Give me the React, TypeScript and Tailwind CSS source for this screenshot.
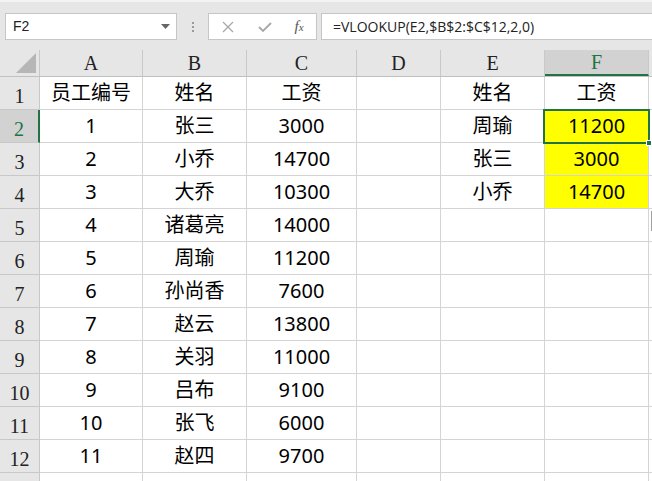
import React from "react";

const cols = [
  { key: "A", w: "w-[103px]" },
  { key: "B", w: "w-[104px]" },
  { key: "C", w: "w-[110px]" },
  { key: "D", w: "w-[84px]" },
  { key: "E", w: "w-[104px]" },
  { key: "F", w: "w-[104px]" },
  { key: "G", w: "w-[40px]" },
];

const data: string[][] = [
  ["员工编号", "姓名", "工资", "", "姓名", "工资"],
  ["1", "张三", "3000", "", "周瑜", "11200"],
  ["2", "小乔", "14700", "", "张三", "3000"],
  ["3", "大乔", "10300", "", "小乔", "14700"],
  ["4", "诸葛亮", "14000", "", "", ""],
  ["5", "周瑜", "11200", "", "", ""],
  ["6", "孙尚香", "7600", "", "", ""],
  ["7", "赵云", "13800", "", "", ""],
  ["8", "关羽", "11000", "", "", ""],
  ["9", "吕布", "9100", "", "", ""],
  ["10", "张飞", "6000", "", "", ""],
  ["11", "赵四", "9700", "", "", ""],
  ["", "", "", "", "", ""],
];

const serif = { fontFamily: '"Liberation Serif", "Times New Roman", serif' };
const cellFont = {
  fontFamily: '"Noto Sans", "Noto Sans CJK SC", sans-serif',
};

export default function App() {
  return (
    <div className="w-[652px] h-[481px] overflow-hidden bg-white relative">
      {/* Formula bar */}
      <div className="h-[50px] bg-[#e6e6e6] border-t-2 border-[#f3f3f3] flex items-start pt-[11px] pl-[5px]">
        <div
          className="w-[172px] h-[27px] bg-white border border-[#c6c6c6] flex items-center justify-between pl-[7px] pr-[6px] text-[14px] text-[#222]"
          style={{ fontFamily: '"Liberation Sans", Arial, sans-serif' }}
        >
          <span>F2</span>
          <svg width="9" height="5" viewBox="0 0 9 5">
            <path d="M0 0 L9 0 L4.5 5 Z" fill="#666" />
          </svg>
        </div>
        <div className="w-[31px] h-[27px] flex flex-col items-center justify-center gap-[2px]">
          <span className="w-[2px] h-[2px] bg-[#9a9a9a]" />
          <span className="w-[2px] h-[2px] bg-[#9a9a9a]" />
          <span className="w-[2px] h-[2px] bg-[#9a9a9a]" />
        </div>
        <div className="w-[109px] h-[27px] bg-white border border-[#c6c6c6] flex items-center">
          <div className="w-[38px] flex justify-center">
            <svg width="12" height="12" viewBox="0 0 12 12">
              <path d="M1 1 L11 11 M11 1 L1 11" stroke="#a8a8a8" strokeWidth="1.3" />
            </svg>
          </div>
          <div className="w-[36px] flex justify-center">
            <svg width="14" height="12" viewBox="0 0 14 12">
              <path d="M1 6 L5 10 L13 2" stroke="#a8a8a8" strokeWidth="1.8" fill="none" />
            </svg>
          </div>
          <div
            className="w-[32px] flex justify-center items-baseline italic text-[#555] leading-none"
            style={serif}
          >
            <span className="text-[15px]">f</span>
            <span className="text-[11px]">x</span>
          </div>
        </div>
        <div
          className="ml-[4px] flex-1 h-[27px] bg-white border border-[#c6c6c6] border-r-0 flex items-center pl-[11px] text-[14px] text-[#222]"
          style={{ fontFamily: '"Open Sans", "Liberation Sans", sans-serif' }}
        >
          =VLOOKUP(E2,$B$2:$C$12,2,0)
        </div>
      </div>

      {/* Column header row */}
      <div className="flex h-[27px] bg-[#e6e6e6] border-b border-[#c0c0c0]">
        <div className="w-[40px] border-r border-[#c8c8c8] relative shrink-0">
          <svg className="absolute right-[3px] bottom-[3px]" width="20" height="20" viewBox="0 0 20 20">
            <path d="M20 0 L20 20 L0 20 Z" fill="#b6b6b6" />
          </svg>
        </div>
        {cols.map((c) => {
          const sel = c.key === "F";
          return (
            <div
              key={c.key}
              className={`${c.w} shrink-0 border-r border-[#c8c8c8] flex items-center justify-center text-[20px] ${
                sel
                  ? "bg-[#d2d2d2] text-[#217346] border-b-2 border-b-[#217346]"
                  : "text-[#222]"
              }`}
              style={serif}
            >
              {c.key === "G" ? "" : c.key}
            </div>
          );
        })}
      </div>

      {/* Rows */}
      {data.map((row, ri) => {
        const rowNum = ri + 1;
        const rowSel = rowNum === 2;
        return (
          <div key={ri} className="flex h-[33px]">
            <div
              className={`w-[40px] shrink-0 flex items-end justify-center pb-[3px] text-[20px] leading-none border-b border-[#c8c8c8] ${
                rowSel
                  ? "bg-[#d2d2d2] text-[#217346] border-r-2 border-r-[#217346]"
                  : "bg-[#e6e6e6] text-[#222] border-r border-r-[#c8c8c8]"
              }`}
              style={serif}
            >
              {rowNum <= 12 ? rowNum : ""}
            </div>
            {cols.map((c, ci) => {
              const v = ci < 6 ? row[ci] : "";
              const yellow = ci === 5 && rowNum >= 2 && rowNum <= 4;
              const active = ci === 5 && rowNum === 2;
              return (
                <div
                  key={c.key}
                  className={`${c.w} shrink-0 border-r border-b border-[#d4d4d4] flex items-center justify-center text-[20px] text-black relative ${
                    yellow ? "bg-[#ffff00]" : ""
                  } ${active ? "z-10" : ""}`}
                  style={cellFont}
                >
                  {v}
                  {active && (
                    <>
                      <div className="absolute left-[-2px] top-[-1px] right-[-2px] bottom-[-2px] border-2 border-[#217346] pointer-events-none" />
                      <div className="absolute right-[-4px] bottom-[-4px] w-[6px] h-[6px] bg-[#217346] border border-white" />
                    </>
                  )}
                  {ci === 6 && rowNum === 5 && (
                    <div className="absolute left-[2px] top-[2px] w-[8px] h-[20px] border border-[#a0a0a0] bg-[#f5f5f5]" />
                  )}
                </div>
              );
            })}
          </div>
        );
      })}
    </div>
  );
}
